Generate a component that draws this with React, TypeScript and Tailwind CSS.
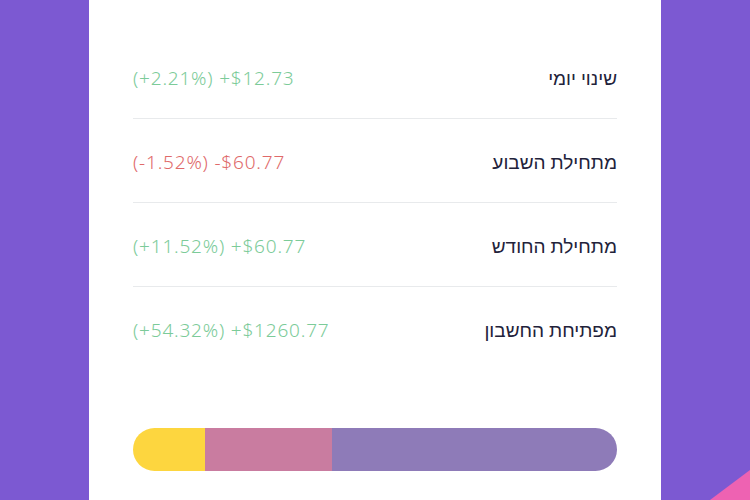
import React from "react";

const rows = [
  { label: "שינוי יומי", value: "(+2.21%) +$12.73", pos: true },
  { label: "מתחילת השבוע", value: "(-1.52%) -$60.77", pos: false },
  { label: "מתחילת החודש", value: "(+11.52%) +$60.77", pos: true },
  { label: "מפתיחת החשבון", value: "(+54.32%) +$1260.77", pos: true },
];

export default function App() {
  return (
    <div className="relative w-[750px] h-[500px] overflow-hidden bg-[#7c59d2] flex justify-center">
      <svg className="absolute right-0 bottom-0" width="40" height="30" viewBox="0 0 40 30">
        <polygon points="0,30 40,0 40,30" fill="#ee62b2" />
      </svg>
      <div className="relative w-[572px] h-full bg-white px-[44px] pt-[35px] flex flex-col">
        {rows.map((r, i) => (
          <div
            key={i}
            className={`h-[84px] pt-[3px] flex items-center justify-between ${i < 3 ? "border-b border-[#e8eaec]" : ""}`}
          >
            <span
              dir="ltr"
              className={`text-[19px] font-light tracking-[0.8px] ${r.pos ? "text-[#7ccb99]" : "text-[#e06a6a]"}`}
              style={{ fontFamily: '"Noto Sans", sans-serif' }}
            >
              {r.value}
            </span>
            <span
              dir="rtl"
              className="text-[19px] text-[#22223a]"
              style={{ fontFamily: '"Noto Sans", sans-serif' }}
            >
              {r.label}
            </span>
          </div>
        ))}
        <div className="mt-[57px] h-[43px] w-full rounded-full overflow-hidden flex">
          <div className="w-[72px] bg-[#fdd63f]" />
          <div className="w-[127px] bg-[#c97ca0]" />
          <div className="flex-1 bg-[#8e7bb8]" />
        </div>
      </div>
    </div>
  );
}
